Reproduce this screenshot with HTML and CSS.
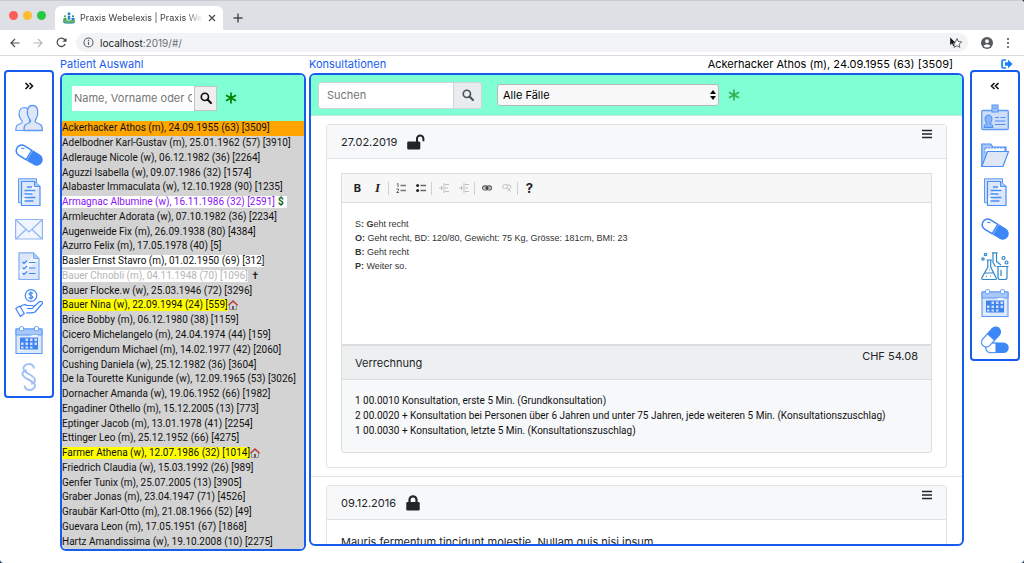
FILE: index.html
```
<!DOCTYPE html>
<html lang="de">
<head>
<meta charset="utf-8">
<title>Praxis Webelexis</title>
<link rel="stylesheet" href="styles.css">
</head>
<body>
<svg class="defs" aria-hidden="true">
  <defs>
    <symbol id="search" viewBox="0 0 16 16"><circle cx="6.500" cy="6.500" r="4.800" fill="none" stroke="currentColor" stroke-width="2.200"/><path d="M10 10l4.600 4.600" stroke="currentColor" stroke-width="2.800" stroke-linecap="round"/></symbol>
    <symbol id="star" viewBox="0 0 12 12"><path d="M6 .4v11.200M1 3.200l10 5.600M11 3.200L1 8.800" stroke="currentColor" stroke-width="1.700" fill="none"/></symbol>
    <symbol id="menu" viewBox="0 0 12 10"><path d="M1 1.500h10M1 5h10M1 8.500h10" stroke="currentColor" stroke-width="1.700"/></symbol>
    <symbol id="pill" viewBox="0 0 28 28">
      <g transform="rotate(31 14 14)"><path d="M14 8.500H5.500a5.500 5.500 0 0 0 0 11H14z" fill="#fff" stroke="#3d86f8" stroke-width="1.500"/><path d="M15 8h8a6 6 0 0 1 0 12h-8z" fill="#3d86f8"/><path d="M4 12.500q1-1.500 3-1.500" fill="none" stroke="#3d86f8"/></g>
    </symbol>
    <symbol id="docs" viewBox="0 0 28 28">
      <path d="M3.500.8h18v24h-18z" fill="#cfdffb" stroke="#5c9af5"/><path d="M6.500 3.500h13l5.500 5v19H6.500z" fill="#dde7f9" stroke="#4a8ff5" stroke-width="1.200"/><path d="M7 20L21 5l3 4L7 26z" fill="#f2f6fd"/><path d="M19.500 3.500v5H25" fill="#a8c9fb" stroke="#4a8ff5"/><path d="M12 9h5M9.500 12.500h11M9.500 16h8M9.500 19.500h11M9.500 23h9" stroke="#4a8ff5" stroke-width="1.300"/>
    </symbol>
    <symbol id="calendar" viewBox="0 0 28 28">
      <path d="M1 3h26v24.500H1z" fill="#dfe8f9" stroke="#5c9af5" stroke-width="1.100"/><path d="M1 3h26v6H1z" fill="#a9c8fa" stroke="#5c9af5"/><path d="M3 25L17 9h6L8 25z" fill="#f4f7fd"/><path d="M5 11.500h18v12H5z" fill="#3f83ee"/><path d="M10.500 12.500h2.500v2.500h-2.500zM15 12.500h2.500v2.500H15zM19.500 12.500H22V15h-2.500zM6 16.500h2.500V19H6zM10.500 16.500h2.500V19h-2.500zM15 16.500h2.500V19H15zM19.500 16.500H22V19h-2.500zM6 20.500h2.500v2H6zM10.500 20.500h2.500v2h-2.500zM15 20.500h2.500v2H15z" fill="#cfe0fc"/><rect x="4.500" y=".7" width="4" height="4" rx="1" fill="#fff" stroke="#5c9af5"/><rect x="19.500" y=".7" width="4" height="4" rx="1" fill="#fff" stroke="#5c9af5"/>
    </symbol>
    <symbol id="house" viewBox="0 0 10 10"><path d="M1.500 4.500v5h7v-5L5 1.800z" fill="#ccd3da" stroke="#777" stroke-width=".7"/><path d="M4 6h2v3.500H4z" fill="#7b5a4c"/><path d="M.4 5.200L5 1l4.600 4.200" fill="none" stroke="#c33a30" stroke-width="1.300"/></symbol>
  </defs>
</svg>

<div class="window">
  <header class="browser">
    <div class="tabs">
      <div class="lights"><i class="red"></i><i class="amber"></i><i class="green"></i></div>
      <div class="tab">
        <svg width="12" height="12" viewBox="0 0 12 12"><circle cx="6" cy="1.800" r="1.500" fill="#2789c9"/><circle cx="2" cy="4.300" r="1.100" fill="#48a545"/><circle cx="10" cy="4.300" r="1.100" fill="#2b79bd"/><path d="M4.700 3.800h2.600v4H4.700z" fill="#2789c9"/><path d="M.5 6h3v3h-3z" fill="#48a545"/><path d="M8.500 6h3v3h-3z" fill="#2b79bd"/><path d="M0 7.500q6 2 12 0v3.200q-6 1.300-12 0z" fill="#5bb16b"/><path d="M1 10.600q5 .8 10 0v.6q-5 .8-10 0z" fill="#2789c9"/></svg>
        <span class="tab-title">Praxis Webelexis | Praxis Webelexis</span>
        <button class="plain" aria-label="Tab schliessen"><svg width="8" height="8" viewBox="0 0 8 8"><path d="M1 1l6 6M7 1L1 7" stroke="#45484c" stroke-width="1.200"/></svg></button>
      </div>
      <button class="plain newtab" aria-label="Neuer Tab"><svg width="10" height="10" viewBox="0 0 10 10"><path d="M5 .5v9M.5 5h9" stroke="#45484c" stroke-width="1.400"/></svg></button>
    </div>
    <div class="toolbar">
      <button class="plain" aria-label="Zurück"><svg width="10" height="10" viewBox="0 0 10 10"><path d="M9.500 5H1M5 1L1 5l4 4" fill="none" stroke="#4b4f54" stroke-width="1.200"/></svg></button>
      <button class="plain" aria-label="Vor"><svg width="10" height="10" viewBox="0 0 10 10"><path d="M.5 5H9M5 1l4 4-4 4" fill="none" stroke="#b4b7ba" stroke-width="1.200"/></svg></button>
      <button class="plain" aria-label="Neu laden"><svg width="11" height="11" viewBox="0 0 11 11"><path d="M9.200 7A4.200 4.200 0 1 1 8.700 2.700L10 4" fill="none" stroke="#4b4f54" stroke-width="1.300"/><path d="M10.500.8v4h-4z" fill="#4b4f54"/></svg></button>
      <div class="address">
        <svg width="11" height="11" viewBox="0 0 11 11"><circle cx="5.500" cy="5.500" r="4.500" fill="none" stroke="#5f6368" stroke-width="1.100"/><path d="M5.500 4.800v3.200M5.500 2.700v1.200" stroke="#5f6368" stroke-width="1.200"/></svg>
        <span class="url">localhost<span class="path">:2019/#/</span></span>
        <svg width="14" height="12" viewBox="0 0 14 12"><path d="M8 1.500l1.300 3.100 3.400.3-2.600 2.200.8 3.300L8 8.700l-2.900 1.700.8-3.300-2.600-2.200 3.400-.3z" fill="#fff" stroke="#5f6368"/><path d="M1 0v8.500l2-1.800 1.200 2.800 1.400-.6-1.200-2.700H7z" fill="#111" stroke="#fff" stroke-width=".4"/></svg>
      </div>
      <svg width="12" height="12" viewBox="0 0 12 12"><circle cx="6" cy="6" r="6" fill="#55585d"/><circle cx="6" cy="4.200" r="1.900" fill="#fff"/><path d="M2.300 8.900Q6 5.500 9.700 8.900Q6 12 2.300 8.900z" fill="#fff"/></svg>
      <button class="plain" aria-label="Menü"><svg width="4" height="12" viewBox="0 0 4 12"><g fill="#55585d"><circle cx="2" cy="2" r="1.100"/><circle cx="2" cy="6" r="1.100"/><circle cx="2" cy="10" r="1.100"/></g></svg></button>
    </div>
  </header>

  <main class="app">
    <div class="side">
      <nav class="rail" aria-label="Linke Ansichten">
        <button class="plain toggle" aria-label="Ausklappen"><svg width="10" height="10" viewBox="0 0 10 10"><path d="M1.500 2L4.500 5l-3 3M5.500 2l3 3-3 3" fill="none" stroke="#16181b" stroke-width="1.700"/></svg></button>
        <button class="plain" aria-label="Patienten"><svg class="icon" viewBox="0 0 28 28"><path d="M.8 26.500c0-5 1-5.500 5-7 2-1 2-2 .5-3.500C3 12 3 4.500 9 3.500c3 0 5 2 5.500 5v18z" fill="#e3eaf8" stroke="#5c9af5" stroke-width="1.100"/><path d="M9 26.500c0-5.500 1-6 5-7.500 2-1 2-2.500.5-4C11 10 11.500 1.500 17.500 1.500S24 10 21 15c-1.500 2-1 3 1 4 4 1.500 5.300 2 5.300 7.500z" fill="#dfe6f5" stroke="#5c9af5" stroke-width="1.300"/></svg></button>
        <button class="plain" aria-label="Medikamente"><svg class="icon"><use href="#pill"/></svg></button>
        <button class="plain" aria-label="Dokumente"><svg class="icon"><use href="#docs"/></svg></button>
        <button class="plain" aria-label="Nachrichten"><svg class="icon" viewBox="0 0 28 28"><path d="M.6 4.500h26.800v19.500H.6z" fill="#f1f5fd" stroke="#8fb5f4" stroke-width="1.200"/><path d="M1 24l10-9.500M27 24l-10-9.500M1 5l13 12L27 5" fill="none" stroke="#8fb5f4" stroke-width="1.200"/></svg></button>
        <button class="plain" aria-label="Checkliste"><svg class="icon" viewBox="0 0 28 28"><path d="M4 .8h14.500L24 6.500v21H4z" fill="#dde7f9" stroke="#7eacf5" stroke-width="1.200"/><path d="M4.600 18L18 4l5 4L5 25z" fill="#f1f5fd"/><path d="M18.500.8v5.700H24" fill="#a9c8fa" stroke="#7eacf5"/><path d="M7.500 10l1.500 1.500 3-3M14 10.500h6.500M7.500 15.500L9 17l3-3M14 16h6.500M7.500 21L9 22.500l3-3M14 21.500h6.500" fill="none" stroke="#3d86f8" stroke-width="1.200"/></svg></button>
        <button class="plain" aria-label="Rechnungen"><svg class="icon" viewBox="0 0 28 28"><g fill="none" stroke="#3d86f8" stroke-width="1.200"><circle cx="16" cy="6.500" r="5.800"/><path d="M18 4.500c-1-1.500-4-1-4 .5s4 1.500 4 3-3 2-4.300.4M16 2.500v8"/><path d="M.8 19.500l4-2.500 4.500 7.500-4 3zM5 18c3-3 5-3 7-1.500h5c2 0 2 3 0 3h-5M18 18.500l6-5.500c2-1.500 4.500 0 3 2L20 23c-2 1.500-7 .5-9 1"/></g></svg></button>
        <button class="plain" aria-label="Agenda"><svg class="icon"><use href="#calendar"/></svg></button>
        <button class="plain" aria-label="Paragraph"><svg class="icon" viewBox="0 0 28 28"><path d="M19 5.500C18.500 2.500 16.500 1 14 1c-3 0-5.500 2-5.500 4.500 0 5 11.500 6.500 11.500 11.500 0 2-1.500 3.500-4 3.500M9.500 22.500c.5 3 2.500 4.500 5 4.500 3 0 5.500-2 5.500-4.500 0-5-12.500-6.500-12.500-11.500 0-2 1.500-3.500 4.500-3.500" fill="none" stroke="#a3c1f5" stroke-width="2"/></svg></button>
      </nav>
    </div>

    <section class="column patients">
      <h2 class="heading"><a href="#patients">Patient Auswahl</a></h2>
      <div class="panel">
        <form class="panel-head">
          <div class="group">
            <input class="field" type="text" aria-label="Patient suchen" placeholder="Name, Vorname oder Geburtsdatum">
            <button class="find" type="button" aria-label="Suchen"><svg width="12" height="12"><use href="#search"/></svg></button>
          </div>
          <button class="plain add" type="button" aria-label="Neuer Patient"><svg width="12" height="12"><use href="#star"/></svg></button>
        </form>
        <ul class="list">
          <li class="selected">Ackerhacker Athos (m), 24.09.1955 (63) [3509]</li>
          <li>Adelbodner Karl-Gustav (m), 25.01.1962 (57) [3910]</li>
          <li>Adlerauge Nicole (w), 06.12.1982 (36) [2264]</li>
          <li>Aguzzi Isabella (w), 09.07.1986 (32) [1574]</li>
          <li>Alabaster Immaculata (w), 12.10.1928 (90) [1235]</li>
          <li><span class="mark debtor">Armagnac Albumine (w), 16.11.1986 (32) [2591]</span><b class="mark dollar">$</b></li>
          <li>Armleuchter Adorata (w), 07.10.1982 (36) [2234]</li>
          <li>Augenweide Fix (m), 26.09.1938 (80) [4384]</li>
          <li>Azurro Felix (m), 17.05.1978 (40) [5]</li>
          <li><span class="mark">Basler Ernst Stavro (m), 01.02.1950 (69) [312]</span></li>
          <li><span class="mark deceased">Bauer Chnobli (m), 04.11.1948 (70) [1096]</span><span class="cross">✝</span></li>
          <li>Bauer Flocke.w (w), 25.03.1946 (72) [3296]</li>
          <li><span class="mark home">Bauer Nina (w), 22.09.1994 (24) [559]</span><svg width="10" height="10"><use href="#house"/></svg></li>
          <li>Brice Bobby (m), 06.12.1980 (38) [1159]</li>
          <li>Cicero Michelangelo (m), 24.04.1974 (44) [159]</li>
          <li>Corrigendum Michael (m), 14.02.1977 (42) [2060]</li>
          <li>Cushing Daniela (w), 25.12.1982 (36) [3604]</li>
          <li>De la Tourette Kunigunde (w), 12.09.1965 (53) [3026]</li>
          <li>Dornacher Amanda (w), 19.06.1952 (66) [1982]</li>
          <li>Engadiner Othello (m), 15.12.2005 (13) [773]</li>
          <li>Eptinger Jacob (m), 13.01.1978 (41) [2254]</li>
          <li>Ettinger Leo (m), 25.12.1952 (66) [4275]</li>
          <li><span class="mark home">Farmer Athena (w), 12.07.1986 (32) [1014]</span><svg width="10" height="10"><use href="#house"/></svg></li>
          <li>Friedrich Claudia (w), 15.03.1992 (26) [989]</li>
          <li>Genfer Tunix (m), 25.07.2005 (13) [3905]</li>
          <li>Graber Jonas (m), 23.04.1947 (71) [4526]</li>
          <li>Graubär Karl-Otto (m), 21.08.1966 (52) [49]</li>
          <li>Guevara Leon (m), 17.05.1951 (67) [1868]</li>
          <li>Hartz Amandissima (w), 19.10.2008 (10) [2275]</li>
        </ul>
      </div>
    </section>

    <section class="column consultations">
      <div class="heading split"><h2><a href="#consultations">Konsultationen</a></h2><span>Ackerhacker Athos (m), 24.09.1955 (63) [3509]</span></div>
      <div class="panel">
        <form class="panel-head">
          <div class="group">
            <input class="field" type="text" aria-label="Konsultationen durchsuchen" placeholder="Suchen">
            <button class="find" type="button" aria-label="Suchen"><svg width="12" height="12"><use href="#search"/></svg></button>
          </div>
          <div class="picker">
            <select aria-label="Fall"><option>Alle Fälle</option></select>
            <svg width="6" height="10" viewBox="0 0 6 10"><path d="M3 0l3 4H0zM3 10l3-4H0z"/></svg>
          </div>
          <button class="plain add" type="button" aria-label="Neue Konsultation"><svg width="12" height="12"><use href="#star"/></svg></button>
        </form>
        <div class="entries">
          <div class="entry">
            <article class="card">
              <header class="card-head"><span>27.02.2019</span><svg width="18" height="16" viewBox="0 0 18 16"><path d="M1.500 7.500H12a1.300 1.300 0 0 1 1.300 1.300v5.400A1.300 1.300 0 0 1 12 15.500H1.500A1.300 1.300 0 0 1 .2 14.200V8.800a1.300 1.300 0 0 1 1.300-1.300z" fill="#212529"/><path d="M10 8V4.700a3.200 3.200 0 0 1 6.400 0v2.500" fill="none" stroke="#212529" stroke-width="2"/></svg><button class="plain more" aria-label="Menü"><svg width="12" height="10"><use href="#menu"/></svg></button></header>
              <div class="card-body">
                <div class="editor">
                  <div class="tools" role="toolbar">
                    <button class="plain bold" aria-label="Fett">B</button>
                    <button class="plain italic" aria-label="Kursiv">I</button>
                    <i class="sep"></i>
                    <button class="plain" aria-label="Nummerierte Liste"><svg width="10" height="10" viewBox="0 0 10 10"><path d="M4.500 2.500H10M4.500 7.500H10" stroke="#777" stroke-width="1.600"/><path d="M1 1l1-.5V4M.5 6h2v1.500L.7 9.500H3" fill="none" stroke="#555" stroke-width=".9"/></svg></button>
                    <button class="plain" aria-label="Aufzählung"><svg width="10" height="10" viewBox="0 0 10 10"><path d="M4.500 2.500H10M4.500 7.500H10" stroke="#666" stroke-width="1.700"/><circle cx="1.600" cy="2.500" r="1.500" fill="#222"/><circle cx="1.600" cy="7.500" r="1.500" fill="#222"/></svg></button>
                    <i class="sep"></i>
                    <button class="plain off" aria-label="Einzug verkleinern" disabled><svg width="10" height="10" viewBox="0 0 10 10"><path d="M5 0v10M6 1.500h4M6 5h3M6 8.500h4M0 5h4M2.500 3v4" fill="none" stroke="#888"/></svg></button>
                    <button class="plain off" aria-label="Einzug vergrössern" disabled><svg width="10" height="10" viewBox="0 0 10 10"><path d="M5 0v10M6 1.500h4M6 5h3M6 8.500h4M0 5h4M2.500 3v4" fill="none" stroke="#888"/></svg></button>
                    <i class="sep"></i>
                    <button class="plain" aria-label="Link"><svg width="10" height="6" viewBox="0 0 10 6"><rect x=".6" y=".8" width="5" height="4.200" rx="2.100" fill="none" stroke="#555" stroke-width="1.200"/><rect x="4.400" y=".8" width="5" height="4.200" rx="2.100" fill="none" stroke="#555" stroke-width="1.200"/><path d="M2.500 3h5" stroke="#333"/></svg></button>
                    <button class="plain off" aria-label="Link entfernen" disabled><svg width="10" height="8" viewBox="0 0 10 8"><rect x=".6" y=".6" width="5" height="4" rx="2" fill="none" stroke="#888"/><path d="M4.500 1H8q2 1.500 0 3M5.500 4l3 3.500M8.500 4l-3 3.500" fill="none" stroke="#888"/></svg></button>
                    <i class="sep"></i>
                    <button class="plain bold help" aria-label="Hilfe">?</button>
                  </div>
                  <div class="text" contenteditable="true" role="textbox" aria-label="Konsultationstext">
                    <p>S<b>: G</b>eht recht</p>
                    <p><b>O:</b> Geht recht, BD: 120/80, Gewicht: 75 Kg, Grösse: 181cm, BMI: 23</p>
                    <p><b>B:</b> Geht recht</p>
                    <p><b>P:</b> Weiter so.</p>
                  </div>
                </div>
                <section class="billing">
                  <header class="billing-head"><h3>Verrechnung</h3><span>CHF 54.08</span></header>
                  <ul>
                    <li>1 00.0010 Konsultation, erste 5 Min. (Grundkonsultation)</li>
                    <li>2 00.0020 + Konsultation bei Personen über 6 Jahren und unter 75 Jahren, jede weiteren 5 Min. (Konsultationszuschlag)</li>
                    <li>1 00.0030 + Konsultation, letzte 5 Min. (Konsultationszuschlag)</li>
                  </ul>
                </section>
              </div>
            </article>
          </div>
          <div class="entry">
            <article class="card">
              <header class="card-head"><span>09.12.2016</span><svg width="14" height="16" viewBox="0 0 14 16"><rect x=".3" y="7" width="13.400" height="8.500" rx="1.300" fill="#212529"/><path d="M3.500 8V4.800a3.500 3.500 0 0 1 7 0V8" fill="none" stroke="#212529" stroke-width="2.200"/></svg><button class="plain more" aria-label="Menü"><svg width="12" height="10"><use href="#menu"/></svg></button></header>
              <div class="card-body">Mauris fermentum tincidunt molestie. Nullam quis nisi ipsum.</div>
            </article>
          </div>
        </div>
      </div>
    </section>

    <div class="side">
      <button class="plain logout" aria-label="Abmelden"><svg width="12" height="10" viewBox="0 0 12 10"><path d="M5 1H2.200Q1 1 1 2.200v5.600Q1 9 2.200 9H5" fill="none" stroke="#1480f8" stroke-width="1.700"/><path d="M4 3.300h3V.8L11.600 5 7 9.200V6.700H4z" fill="#1480f8"/></svg></button>
      <nav class="rail" aria-label="Rechte Ansichten">
        <button class="plain toggle" aria-label="Einklappen"><svg width="10" height="10" viewBox="0 0 10 10"><path d="M4.500 2l-3 3 3 3M8.500 2l-3 3 3 3" fill="none" stroke="#16181b" stroke-width="1.700"/></svg></button>
        <button class="plain" aria-label="Stammdaten"><svg class="icon" viewBox="0 0 28 28"><rect x=".8" y="6.500" width="26.500" height="19" rx="1" fill="#cfdef8" stroke="#5c9af5" stroke-width="1.300"/><path d="M3 23.500c0-3 1-3 3-4-3-3-2.500-8.500 1.500-8.500s4.500 5.500 1.500 8.500c2 1 3 1 3 4z" fill="#8ab4f7" stroke="#4a8ff5"/><path d="M14 13.500h4M19.500 13.500h5M14 17h10.500M14 20.500h10.500" stroke="#4a8ff5" stroke-width="1.200"/><rect x="11" y="1" width="6" height="7" fill="#a9c8fa" stroke="#4a8ff5"/><circle cx="14" cy="4" r="1.200" fill="#fff" stroke="#4a8ff5"/></svg></button>
        <button class="plain" aria-label="Ordner"><svg class="icon" viewBox="0 0 28 28"><path d="M.8 25V3h9l2 3H25v5L20 25.500z" fill="#a9c8fa" stroke="#4a8ff5" stroke-width="1.200"/><path d="M4 7h20v5H4z" fill="#fff" stroke="#4a8ff5" stroke-dasharray="2 1"/><path d="M.8 25.500L6.500 10.500h21L22 25.500z" fill="#dfe6f5" stroke="#4a8ff5" stroke-width="1.200"/></svg></button>
        <button class="plain" aria-label="Dokumente"><svg class="icon"><use href="#docs"/></svg></button>
        <button class="plain" aria-label="Medikamente"><svg class="icon"><use href="#pill"/></svg></button>
        <button class="plain" aria-label="Labor"><svg class="icon" viewBox="0 0 28 28"><g fill="none" stroke="#2f86c8" stroke-width="1.200"><path d="M5.500 8H11M6.800 8v7L1 25.500q-.5 2 1 2h12q2 0 1-2L9.700 15V8M3.500 21h9.500M5 24.500h1M9 24h1M8 18h.8"/><path d="M11 .8h5.500M12 1v9.500l2.500 4M15.500 1v8.500l4.500 3.500"/><path d="M15.500 14.500h12M17 15v10.500q0 2 2 2h5q2 0 2-2V15M20 18v6"/><circle cx="4.500" cy="2.500" r="1.200"/><circle cx="2" cy="7" r="1.200"/><circle cx="22.500" cy="6" r="1.500"/><circle cx="25.500" cy="10.500" r="1.500"/></g></svg></button>
        <button class="plain" aria-label="Agenda"><svg class="icon"><use href="#calendar"/></svg></button>
        <button class="plain" aria-label="Rezepte"><svg class="icon" viewBox="0 0 28 28"><path d="M15 17H9.500a4.800 4.800 0 0 0 0 9.600H15z" fill="#fff" stroke="#5c9af5" stroke-width="1.300"/><path d="M15 16.500h7.500a5.200 5.200 0 0 1 0 10.500H15z" fill="#3d86f8"/><g transform="rotate(-48 10 11)"><path d="M10 6.200H3a4.800 4.800 0 0 0 0 9.600h7z" fill="#fff" stroke="#5c9af5" stroke-width="1.300"/><path d="M10 5.600h7a5.400 5.400 0 0 1 0 10.800h-7z" fill="#3d86f8"/></g></svg></button>
      </nav>
    </div>
  </main>
</div>
</body>
</html>
```

FILE: styles.css
```
* { box-sizing: border-box; }
body {
  margin: 0;
  background: #1d3350;
  color: #212529;
  font-family: Inter, "Liberation Sans", sans-serif;
  font-size: 11px;
  line-height: 16px;
}
h2, h3, ul, p { margin: 0; padding: 0; font-size: inherit; font-weight: 400; }
ul { list-style: none; }
a { color: #175cf0; text-decoration: none; }
svg { flex: none; display: block; }
input, select, button { font: inherit; }
.defs { position: absolute; width: 0; height: 0; }
.plain {
  display: flex;
  align-items: center;
  justify-content: center;
  padding: 0;
  border: 0;
  background: none;
  color: inherit;
}
.window {
  display: flex;
  flex-direction: column;
  height: 100vh;
  overflow: hidden;
  background: #fff;
  border-radius: 0 4px 4px 4px;
}

/* Browser frame */
.tabs {
  display: flex;
  align-items: flex-end;
  height: 30px;
  background: #dee0e5;
  border-top: 1px solid #c9cbd0;
}
.lights { display: flex; gap: 5px; padding: 0 9px 10px; }
.lights i { width: 9px; height: 9px; border-radius: 50%; }
.red { background: #fd5d55; }
.amber { background: #fdbc2f; }
.green { background: #28c840; }
.tab {
  display: flex;
  align-items: center;
  gap: 5px;
  width: 168px;
  height: 24px;
  padding: 0 7px 0 8px;
  background: #fff;
  border-radius: 6px 6px 0 0;
}
.tab-title {
  flex: 1;
  overflow: hidden;
  white-space: nowrap;
  font-size: 9px;
  color: #3c4043;
  mask-image: linear-gradient(to right, #000 85%, transparent);
}
.newtab { width: 30px; height: 24px; }
.toolbar {
  display: flex;
  align-items: center;
  gap: 13px;
  height: 26px;
  padding: 0 14px 0 10px;
  border-bottom: 1px solid #d8dadd;
}
.address {
  display: flex;
  flex: 1;
  align-items: center;
  gap: 6px;
  height: 19px;
  margin-left: -4px;
  padding: 0 5px 0 7px;
  background: #f1f3f4;
  border-radius: 10px;
}
.url { flex: 1; font-size: 10px; color: #202124; }
.path { color: #6b6f74; }

/* Application frame */
.app { display: flex; flex: 1; gap: 6px; min-height: 0; padding: 0 4px 12px; }
.side { display: flex; flex-direction: column; width: 50px; padding-top: 14px; }
.logout { align-self: flex-end; width: 26px; height: 14px; margin-top: -14px; padding-top: 2px; }
.rail {
  display: flex;
  flex-direction: column;
  padding-bottom: 1px;
  border: 2px solid #175cf0;
  border-radius: 4px;
}
.rail .plain { height: 37px; }
.rail .toggle { height: 27px; }
.icon { width: 28px; height: 28px; }
.column { display: flex; flex-direction: column; min-width: 0; }
.heading { height: 17px; }
.split { display: flex; justify-content: space-between; padding-right: 11px; color: #000; }
.panel {
  display: flex;
  flex: 1;
  flex-direction: column;
  min-height: 0;
  overflow: hidden;
  border: 2px solid #175cf0;
  border-radius: 6px;
}
.panel-head { display: flex; align-items: center; background: #80ffd4; }
.group { display: flex; }
.field {
  min-width: 0;
  border: 0;
  background: #fff;
}
.field::placeholder { color: #757575; opacity: 1; }
.find { display: flex; align-items: center; justify-content: center; padding: 0; }
.add { width: 12px; height: 12px; }

/* Patient column */
.patients { width: 246px; }
.patients .panel-head { gap: 8px; padding: 0 10px; height: 46px; }
.patients .field { width: 122px; height: 25px; padding: 0 2px; }
.patients .find { width: 23px; height: 25px; border: 1px solid #c4c4c4; background: #efefef; color: #111; }
.patients .add { color: #008000; }
.list {
  display: grid;
  flex: 1;
  grid-auto-rows: 1fr;
  min-height: 0;
  background: #d3d3d3;
  color: #111;
  font-family: Roboto, "Liberation Sans", sans-serif;
  font-size: 10px;
  line-height: 12px;
  white-space: nowrap;
}
.list li { display: flex; align-items: center; min-height: 0; }
.selected { background: #ffa500; }
.mark { background: #fff; }
.debtor { color: #8a12f5; }
.dollar { padding: 0 3px; color: #0a5c14; }
.deceased { color: #b5b5b5; }
.cross { padding-left: 3px; }
.home { background: #ff0; }

/* Consultation column */
.consultations { flex: 1; margin: 0 0 5px -3px; }
.consultations .panel-head { height: 41px; padding: 0 7px; border-bottom: 1px solid #b9eedb; }
.consultations .field { width: 136px; height: 27px; padding: 0 8px; border: 1px solid #ced4da; border-radius: 3px 0 0 3px; }
.consultations .find { width: 28px; height: 27px; border: 1px solid #ced4da; border-left: 0; border-radius: 0 3px 3px 0; background: #e9ecef; color: #495057; }
.consultations .add { color: #35ae55; }
.picker { position: relative; flex: 0 1 222px; margin: 0 9px 0 15px; }
.picker select {
  display: block;
  width: 100%;
  height: 22px;
  padding: 0 5px;
  appearance: none;
  border: 1px solid #b5b9bb;
  border-radius: 3px;
  background: #f8f8f8;
  color: #000;
}
.picker svg { position: absolute; top: 6px; right: 3px; pointer-events: none; }
.entries { flex: 1; min-height: 0; overflow-y: auto; scrollbar-width: none; }
.entry { padding: 8px 15px; border-bottom: 1px solid #e3e4e5; }
.card { border: 1px solid #e1e2e3; border-radius: 3px; }
.card-head {
  display: flex;
  align-items: center;
  gap: 10px;
  height: 34px;
  padding: 0 13px 0 14px;
  background: #f7f8fa;
  border-bottom: 1px solid #e1e2e3;
}
.more { align-self: flex-start; margin-left: auto; padding-top: 4px; }
.card-body { padding: 14px; }
.editor { border: 1px solid #dcdcdc; }
.tools {
  display: flex;
  align-items: center;
  gap: 1px;
  height: 29px;
  padding: 0 6px;
  border-bottom: 1px solid #dcdcdc;
  background: #f7f7f7;
}
.tools .plain { width: 19px; height: 19px; }
.sep { width: 1px; height: 13px; background: #cfcfcf; margin-right: 1px; }
.bold { font-weight: 700; }
.help { font-size: 13px; }
.italic { font-family: "Liberation Serif", serif; font-size: 13px; font-style: italic; font-weight: 700; }
.off { opacity: .5; }
.text {
  min-height: 141px;
  padding: 14px 13px;
  color: #333;
  font-family: "Liberation Sans", Arial, sans-serif;
  font-size: 9px;
  line-height: 14px;
}
.billing { border: 1px solid #dcdddf; border-radius: 0 0 3px 3px; background: #f7f8fa; }
.billing-head {
  display: flex;
  justify-content: space-between;
  height: 34px;
  padding: 2px 13px;
  background: #eeeff1;
  border-bottom: 1px solid #dcdddf;
}
.billing-head h3 { align-self: center; }
.billing ul {
  padding: 13px 13px 14px;
  color: #111;
  font-family: Roboto, "Liberation Sans", sans-serif;
  font-size: 10px;
  line-height: 15px;
}
```
